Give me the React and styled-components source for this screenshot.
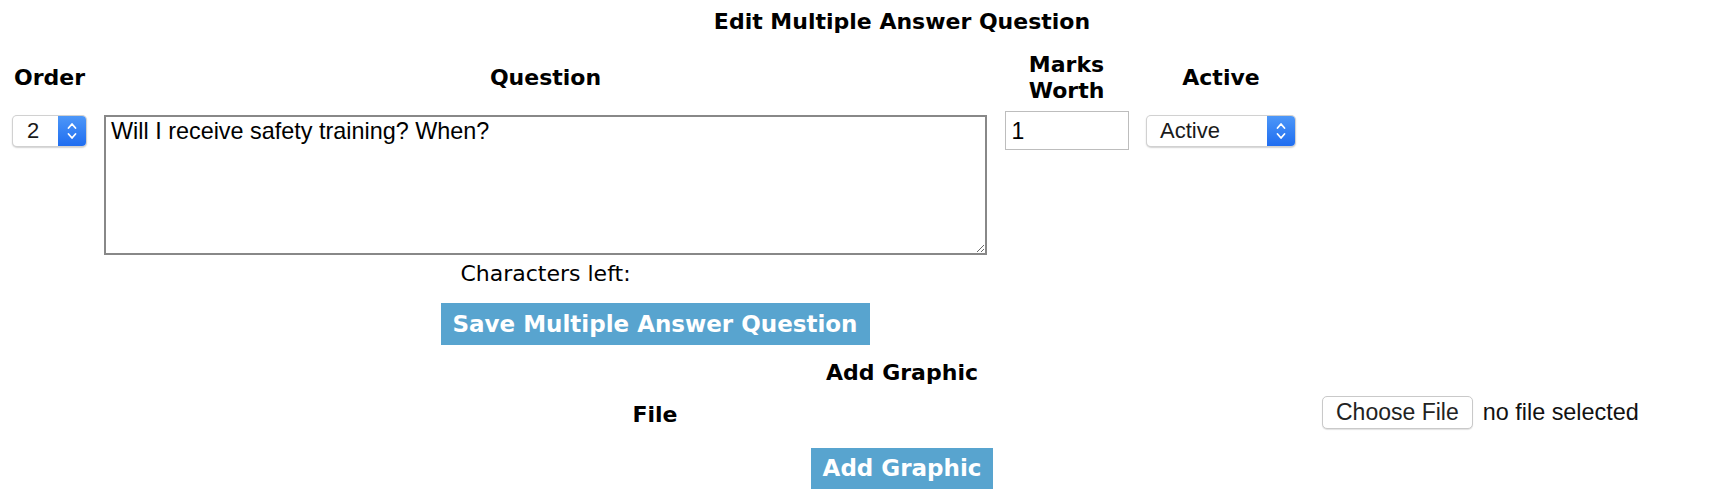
import React from "react";
import styled, { createGlobalStyle } from "styled-components";

const GlobalStyle = createGlobalStyle`
  html, body { overflow: hidden; }
  body {
    margin: 8px;
    background: #ffffff;
    color: #000000;
    font-family: "DejaVu Sans", Verdana, sans-serif;
  }
`;

const Page = styled.div`
  width: 1788px;
  display: flex;
  flex-direction: column;
`;

const Heading = styled.div`
  font-family: "DejaVu Sans", Verdana, sans-serif;
  font-weight: bold;
  font-size: 22px;
  line-height: 27px;
  text-align: center;
  margin-top: ${(p) => p.$mt || 0}px;
`;

const Section = styled.div`
  width: 1294px;
  display: flex;
  flex-direction: column;
  align-items: center;
`;

const QuestionGrid = styled.div`
  margin-top: 17px;
  align-self: stretch;
  display: grid;
  grid-template-columns: 83px 901px 133px 168px;
  column-gap: 4px;
  row-gap: 7px;
`;

const HeadCell = styled.div`
  font-family: "DejaVu Sans", Verdana, sans-serif;
  font-weight: bold;
  font-size: 22px;
  line-height: 26px;
  text-align: center;
  align-self: center;
`;

const Cell = styled.div`
  display: flex;
  flex-direction: column;
  align-items: center;
  padding-top: ${(p) => p.$pt || 0}px;
`;

const SelectBox = styled.div`
  box-sizing: border-box;
  width: ${(p) => p.$w}px;
  height: 32px;
  border-radius: 5px;
  background: #ffffff;
  border: 1px solid rgba(0, 0, 0, 0.18);
  box-shadow: 0 1px 1.5px rgba(0, 0, 0, 0.18);
  display: flex;
  align-items: center;
  overflow: hidden;
  font-family: "Liberation Sans", Arial, sans-serif;
  font-size: 22px;
  color: #1a1a1a;
`;

const SelectLabel = styled.span`
  flex: 1;
  padding-left: ${(p) => p.$pl}px;
  line-height: 30px;
`;

const SelectArrow = styled.span`
  width: 28px;
  align-self: stretch;
  background: linear-gradient(#4d97f8, #1f6df0);
  display: flex;
  align-items: center;
  justify-content: center;
`;

const QuestionArea = styled.textarea`
  box-sizing: border-box;
  width: 883px;
  height: 140px;
  border: 2px solid #888888;
  padding: 1px 5px;
  margin: 0;
  font-family: "Liberation Sans", Arial, sans-serif;
  font-size: 23.4px;
  line-height: 26px;
  color: #000;
  background: #fff;
  outline: none;
`;

const CharsLeft = styled.div`
  margin-top: 5px;
  font-family: "DejaVu Sans", Verdana, sans-serif;
  font-size: 22px;
  line-height: 27px;
`;

const MarksInput = styled.input`
  box-sizing: border-box;
  width: 124px;
  height: 39px;
  border: 1px solid #bdbdbd;
  padding: 2px 6px 0;
  margin: 0;
  font-family: "Liberation Sans", Arial, sans-serif;
  font-size: 23px;
  color: #000;
  outline: none;
`;

const BlueButton = styled.button`
  margin-top: ${(p) => p.$mt || 0}px;
  height: ${(p) => p.$h}px;
  padding: 0 12px;
  border: none;
  border-radius: 0;
  background: #58a4cf;
  color: #ffffff;
  font-family: "DejaVu Sans", Verdana, sans-serif;
  font-weight: bold;
  font-size: 23px;
  line-height: ${(p) => p.$h}px;
  cursor: pointer;
  align-self: center;
`;

const FileGrid = styled.div`
  margin-top: 10px;
  display: grid;
  grid-template-columns: 1294px auto;
  column-gap: 20px;
  align-items: center;
`;

const FileLabel = styled.div`
  font-family: "DejaVu Sans", Verdana, sans-serif;
  font-weight: bold;
  font-size: 22px;
  line-height: 27px;
  text-align: center;
  padding-top: 4px;
`;

const FilePicker = styled.div`
  display: flex;
  align-items: center;
  gap: 10px;
  font-family: "Liberation Sans", Arial, sans-serif;
  font-size: 23.4px;
  color: #111;
`;

const ChooseButton = styled.button`
  box-sizing: border-box;
  height: 33px;
  padding: 0 13px;
  border: 1px solid #c9c9c9;
  border-radius: 5px;
  background: #ffffff;
  box-shadow: 0 1px 1px rgba(0, 0, 0, 0.12);
  font-family: "Liberation Sans", Arial, sans-serif;
  font-size: 23px;
  color: #222;
  line-height: 31px;
`;

function Chevrons() {
  return (
    <svg width="12" height="22" viewBox="0 0 12 22" fill="none">
      <path d="M2.5 8 L6 4 L9.5 8" stroke="#fff" strokeWidth="1.8" strokeLinecap="round" strokeLinejoin="round" />
      <path d="M2.5 14 L6 18 L9.5 14" stroke="#fff" strokeWidth="1.8" strokeLinecap="round" strokeLinejoin="round" />
    </svg>
  );
}

function Select({ width, label, pl }) {
  return (
    <SelectBox $w={width}>
      <SelectLabel $pl={pl}>{label}</SelectLabel>
      <SelectArrow>
        <Chevrons />
      </SelectArrow>
    </SelectBox>
  );
}

export default function App() {
  return (
    <>
      <GlobalStyle />
      <Page>
        <Heading>Edit Multiple Answer Question</Heading>
        <Section>
          <QuestionGrid>
            <HeadCell>Order</HeadCell>
            <HeadCell>Question</HeadCell>
            <HeadCell>
              Marks
              <br />
              Worth
            </HeadCell>
            <HeadCell>Active</HeadCell>

            <Cell $pt={4}>
              <Select width={75} label="2" pl={14} />
            </Cell>
            <Cell $pt={4}>
              <QuestionArea defaultValue="Will I receive safety training? When?" />
              <CharsLeft>Characters left:</CharsLeft>
            </Cell>
            <Cell>
              <MarksInput defaultValue="1" />
            </Cell>
            <Cell $pt={4}>
              <Select width={150} label="Active" pl={13} />
            </Cell>
          </QuestionGrid>
          <BlueButton $mt={16} $h={42}>Save Multiple Answer Question</BlueButton>
        </Section>
        <Heading $mt={14}>Add Graphic</Heading>
        <FileGrid>
          <FileLabel>File</FileLabel>
          <FilePicker>
            <ChooseButton>Choose File</ChooseButton>
            <span>no file selected</span>
          </FilePicker>
        </FileGrid>
        <BlueButton $mt={19} $h={41}>Add Graphic</BlueButton>
      </Page>
    </>
  );
}
